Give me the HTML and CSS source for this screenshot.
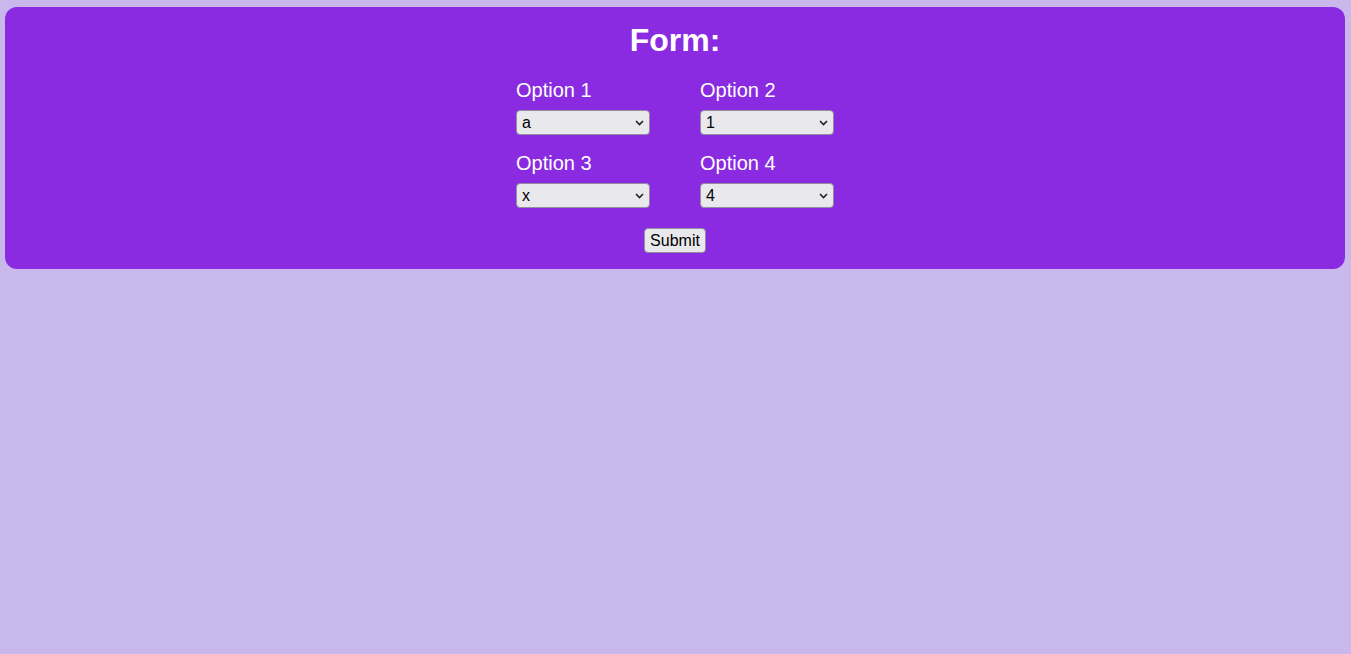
FILE: index.html
```html
<!DOCTYPE html>
<html lang="en">
<head>
<meta charset="utf-8">
<title>Form</title>
<link rel="stylesheet" href="styles.css">
</head>
<body>
<form class="card">
  <h1 class="title">Form:</h1>
  <div class="grid">
    <div class="field">
      <label class="label" for="o1">Option 1</label>
      <div class="select-wrap">
        <select class="select" id="o1"><option>a</option><option>b</option><option>c</option></select>
        <svg class="chevron" width="9" height="6" viewBox="0 0 9 6"><path d="M1 1 L4.5 4.5 L8 1" fill="none" stroke="#222" stroke-width="1.6"/></svg>
      </div>
    </div>
    <div class="field">
      <label class="label" for="o2">Option 2</label>
      <div class="select-wrap">
        <select class="select" id="o2"><option>1</option><option>2</option><option>3</option></select>
        <svg class="chevron" width="9" height="6" viewBox="0 0 9 6"><path d="M1 1 L4.5 4.5 L8 1" fill="none" stroke="#222" stroke-width="1.6"/></svg>
      </div>
    </div>
    <div class="field">
      <label class="label" for="o3">Option 3</label>
      <div class="select-wrap">
        <select class="select" id="o3"><option>x</option><option>y</option><option>z</option></select>
        <svg class="chevron" width="9" height="6" viewBox="0 0 9 6"><path d="M1 1 L4.5 4.5 L8 1" fill="none" stroke="#222" stroke-width="1.6"/></svg>
      </div>
    </div>
    <div class="field">
      <label class="label" for="o4">Option 4</label>
      <div class="select-wrap">
        <select class="select" id="o4"><option>4</option><option>5</option><option>6</option></select>
        <svg class="chevron" width="9" height="6" viewBox="0 0 9 6"><path d="M1 1 L4.5 4.5 L8 1" fill="none" stroke="#222" stroke-width="1.6"/></svg>
      </div>
    </div>
  </div>
  <div class="actions">
    <button class="submit" type="submit">Submit</button>
  </div>
</form>
</body>
</html>
```

FILE: styles.css
```css
html, body {
  margin: 0;
  padding: 0;
}
body {
  background: #c9b8eb;
  font-family: "Liberation Sans", Arial, sans-serif;
  min-height: 654px;
  padding-top: 7px;
  box-sizing: border-box;
}
.card {
  margin: 0 6px 0 5px;
  background: #8a2be2;
  border-radius: 12px;
  padding: 15px 0 16px;
  color: #fff;
  display: flex;
  flex-direction: column;
  align-items: center;
}
.title {
  margin: 0 0 20px;
  font-size: 32px;
  font-weight: bold;
  line-height: 37px;
}
.grid {
  display: grid;
  grid-template-columns: 134px 134px;
  column-gap: 50px;
  row-gap: 17px;
}
.field {
  display: flex;
  flex-direction: column;
}
.label {
  font-size: 20px;
  line-height: 23px;
  margin-bottom: 8px;
}
.select-wrap {
  position: relative;
  width: 134px;
  height: 25px;
}
.select {
  appearance: none;
  -webkit-appearance: none;
  box-sizing: border-box;
  width: 134px;
  height: 25px;
  margin: 0;
  padding: 0 20px 0 5px;
  background: #e9e9ed;
  border: 1px solid #8f8f9d;
  border-radius: 4px;
  color: #000;
  font-family: "Liberation Sans", Arial, sans-serif;
  font-size: 16px;
}
.chevron {
  position: absolute;
  right: 6px;
  top: 10px;
  pointer-events: none;
}
.actions {
  margin-top: 20px;
}
.submit {
  box-sizing: border-box;
  font-family: "Liberation Sans", Arial, sans-serif;
  font-size: 16px;
  height: 25px;
  padding: 0 5px;
  background: #e9e9ed;
  border: 1px solid #8f8f9d;
  border-radius: 4px;
  color: #000;
}
```
